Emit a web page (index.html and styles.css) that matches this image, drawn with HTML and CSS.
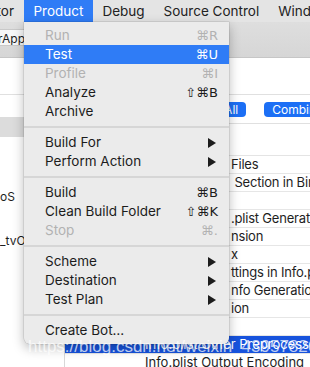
FILE: index.html
```html
<!DOCTYPE html>
<html lang="en">

<head>
    <meta charset="utf-8" />
    <title>Product Menu</title>
    <link rel="stylesheet" href="styles.css">
</head>

<body>
    <div class="screen">
        <div class="menubar">
            <div class="title cut"><span>Editor</span></div>
            <div class="title active">Product</div>
            <div class="title">Debug</div>
            <div class="title">Source Control</div>
            <div class="title">Window</div>
        </div>

        <div class="toolbar">
            <div class="scheme"><span>ColorApp</span></div>
        </div>

        <div class="workspace">
            <div class="navigator">
                <div class="nav-head"></div>
                <div class="nav-filter"></div>
                <div class="nav-row selected"></div>
                <div class="nav-list">
                    <div class="nav-row"></div>
                    <div class="nav-row"></div>
                    <div class="nav-row">oS</div>
                    <div class="nav-row"></div>
                    <div class="nav-row">_tvOS</div>
                </div>
            </div>

            <div class="editor">
                <div class="tabs"></div>
                <div class="filters">
                    <span class="pill">Basic</span>
                    <span class="pill">Customized</span>
                    <span class="pill on">All</span>
                    <span class="divider"></span>
                    <span class="pill on">Combined</span>
                    <span class="pill">Levels</span>
                </div>
                <div class="section"></div>
                <!-- only the tail of each setting name shows past the menu -->
                <div class="settings">
                    <div class="row tail">Files</div>
                    <div class="row tail"> Section in Binary</div>
                    <div class="row tail"></div>
                    <div class="row tail">.plist Generation</div>
                    <div class="row tail">nsion</div>
                    <div class="row tail">x</div>
                    <div class="row tail">ttings in Info.plist File</div>
                    <div class="row tail">nfo Generation</div>
                    <div class="row tail">ion</div>
                    <div class="row tail"></div>
                    <div class="row picked">Info.plist Other Preprocessor Flags</div>
                    <div class="row">Info.plist Output Encoding</div>
                </div>
            </div>
        </div>

        <!-- the open Product menu -->
        <div class="menu">
            <div class="item off"><span>Run</span><span class="key">⌘R</span></div>
            <div class="item hot"><span>Test</span><span class="key">⌘U</span></div>
            <div class="item off"><span>Profile</span><span class="key">⌘I</span></div>
            <div class="item"><span>Analyze</span><span class="key">⇧⌘B</span></div>
            <div class="item"><span>Archive</span></div>
            <div class="sep"></div>
            <div class="item"><span>Build For</span><span class="arrow"></span></div>
            <div class="item"><span>Perform Action</span><span class="arrow"></span></div>
            <div class="sep"></div>
            <div class="item"><span>Build</span><span class="key">⌘B</span></div>
            <div class="item"><span>Clean Build Folder</span><span class="key">⇧⌘K</span></div>
            <div class="item off"><span>Stop</span><span class="key">⌘.</span></div>
            <div class="sep"></div>
            <div class="item"><span>Scheme</span><span class="arrow"></span></div>
            <div class="item"><span>Destination</span><span class="arrow"></span></div>
            <div class="item"><span>Test Plan</span><span class="arrow"></span></div>
            <div class="sep"></div>
            <div class="item"><span>Create Bot…</span></div>
        </div>

        <div class="watermark">https://blog.csdn.net/weixin_43957826</div>
    </div>
</body>

</html>
```

FILE: styles.css
```css
* {
    padding: 0;
    margin: 0;
    box-sizing: border-box;
}

body {
    width: 310px;
    height: 367px;
    overflow: hidden;
    background-color: #ffffff;
    font-family: "Inter", "DejaVu Sans", sans-serif;
    font-size: 13px;
    color: #1e1e1e;
}

.screen {
    position: relative;
    width: 310px;
    height: 367px;
    overflow: hidden;
    display: flex;
    flex-direction: column;
}

/* menu bar */

.menubar {
    height: 22px;
    flex-shrink: 0;
    display: flex;
    background-color: #e4e4e4;
}

.title {
    height: 22px;
    line-height: 22px;
    padding: 0 9.5px;
    white-space: nowrap;
    flex-shrink: 0;
    font-size: 13.5px;
    color: #222222;
}

.title.cut {
    width: 24px;
    padding: 0 10px 0 0;
    display: flex;
    justify-content: flex-end;
    overflow: hidden;
}

.title.active {
    background-color: #2f7cf6;
    color: #ffffff;
}

/* toolbar */

.toolbar {
    height: 36px;
    flex-shrink: 0;
    background: linear-gradient(#dedede, #d6d6d6);
    border-bottom: 1px solid #c6c6c6;
    padding-top: 7px;
}

.scheme {
    width: 28px;
    height: 17px;
    line-height: 17px;
    padding-right: 2px;
    background-color: #f7f7f7;
    border: 1px solid #c9c9c9;
    border-left: none;
    border-radius: 0 4px 4px 0;
    font-size: 12px;
    display: flex;
    justify-content: flex-end;
    overflow: hidden;
}

/* workspace below */

.workspace {
    flex: 1;
    display: flex;
    min-height: 0;
}

.navigator {
    width: 65px;
    flex-shrink: 0;
    border-right: 1px solid #d8d8d8;
    font-size: 12px;
}

.nav-head {
    height: 37px;
    border-bottom: 1px solid #e0e0e0;
}

.nav-filter {
    height: 22px;
}

.nav-row {
    height: 22px;
    line-height: 22px;
    white-space: nowrap;
}

.nav-row.selected {
    height: 20px;
    background-color: #dcdcdc;
}

.nav-list {
    padding-top: 5px;
}

.editor {
    flex: 1;
    min-width: 0;
}

.tabs {
    height: 37px;
    border-bottom: 1px solid #e0e0e0;
}

.filters {
    height: 29px;
    border-bottom: 1px solid #e0e0e0;
    display: flex;
    align-items: center;
    gap: 4px;
    padding: 1px 0 0 13px;
    white-space: nowrap;
}

.pill {
    height: 15px;
    line-height: 15px;
    padding: 0 8px;
    border-radius: 4px;
    font-size: 12px;
    color: #333333;
}

.pill.on {
    background-color: #1c6ff5;
    color: #ffffff;
}

.divider {
    width: 1px;
    height: 13px;
    margin: 0 5px;
    background-color: #dcdcdc;
}

.section {
    height: 32px;
    border-bottom: 1px solid #e4e4e4;
}

.row {
    height: 18px;
    line-height: 17px;
    padding-left: 80px;
    border-bottom: 1px solid #e6e6e6;
    white-space: pre;
    overflow: hidden;
}

.row.tail {
    padding-left: 166px;
    letter-spacing: -0.2px;
}

.row.picked {
    background-color: #1753dd;
    color: #ffffff;
}

/* product menu */

.menu {
    position: absolute;
    top: 22px;
    left: 24px;
    width: 205px;
    padding: 4px 0;
    background-color: #ebebeb;
    border-radius: 0 0 6px 6px;
    box-shadow: 0 0 0 0.5px rgba(0, 0, 0, 0.15), 0 4px 12px rgba(0, 0, 0, 0.28);
    z-index: 2;
}

.item {
    height: 19px;
    line-height: 19px;
    padding: 0 11px 0 21px;
    display: flex;
    justify-content: space-between;
    align-items: center;
    font-size: 13.5px;
    color: #1c1c1c;
}

.item.off {
    color: #b2b2b2;
}

.item.hot {
    background-color: #2f7cf6;
    color: #ffffff;
}

.key {
    font-family: "DejaVu Sans", sans-serif;
    font-size: 13px;
}

.arrow {
    width: 0;
    height: 0;
    margin-right: 2px;
    border-top: 5px solid transparent;
    border-bottom: 5px solid transparent;
    border-left: 8px solid #1c1c1c;
}

.sep {
    height: 12px;
    display: flex;
    align-items: center;
}

.sep:after {
    content: "";
    flex: 1;
    height: 2px;
    background-color: #d6d6d6;
}

.watermark {
    position: absolute;
    left: 28px;
    top: 337px;
    font-family: "Liberation Sans", sans-serif;
    font-size: 17px;
    color: rgba(255, 255, 255, 0.72);
    white-space: nowrap;
    z-index: 3;
}
```
